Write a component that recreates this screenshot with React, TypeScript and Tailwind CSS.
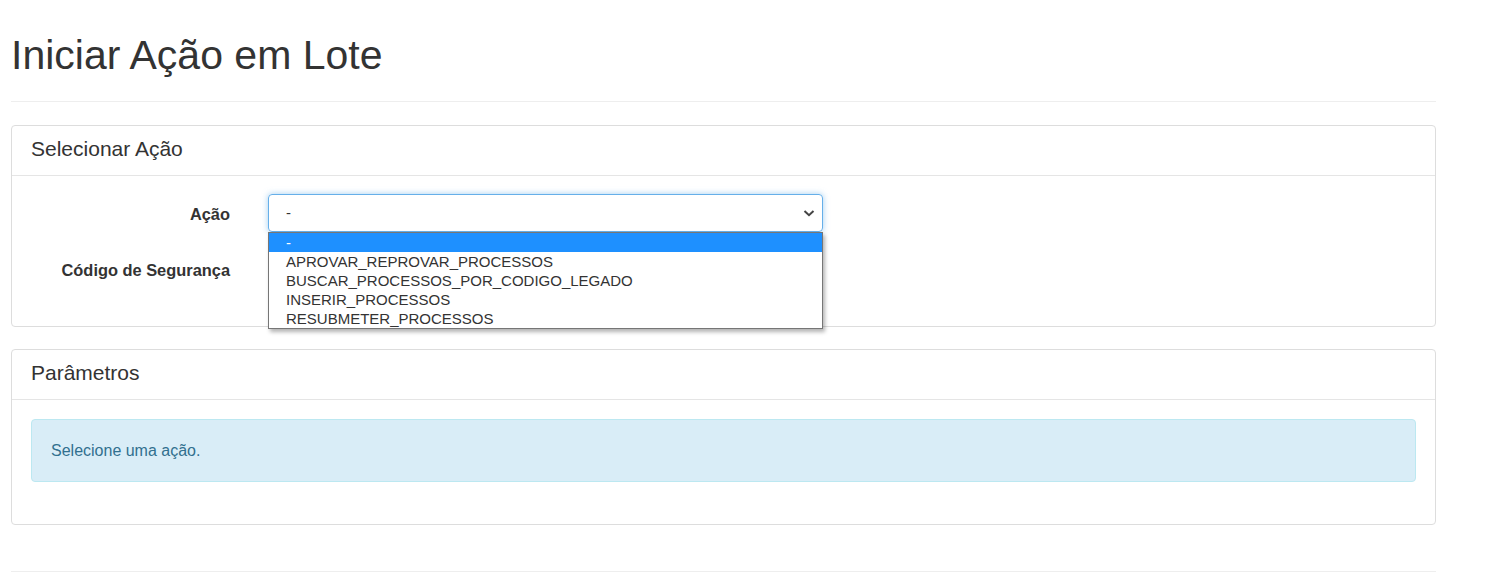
import React from "react"

const acoes = [
  "-",
  "APROVAR_REPROVAR_PROCESSOS",
  "BUSCAR_PROCESSOS_POR_CODIGO_LEGADO",
  "INSERIR_PROCESSOS",
  "RESUBMETER_PROCESSOS",
]

const Panel: React.FC<{ title: string; children: React.ReactNode }> = ({ title, children }) => (
  <div className="rounded-[4px] border border-[#dddddd] bg-white">
    <div className="flex h-[50px] items-center border-b border-[#e5e5e5] px-[19px] pb-[3px] text-[21px] text-[#333333]">
      {title}
    </div>
    {children}
  </div>
)

export default function App() {
  return (
    <div className="min-h-[575px] bg-white font-['Liberation_Sans',Arial,sans-serif] text-[#333333]">
      <div className="ml-[11px] w-[1425px]">
        <h1 className="pt-[35px] text-[41px] leading-[40px]">Iniciar Ação em Lote</h1>
        <hr className="mt-[26px] border-t border-[#eeeeee]" />

        <div className="mt-[23px]">
          <Panel title="Selecionar Ação">
            <div className="flex flex-col gap-[19px] px-[19px] pb-[37px] pt-[18px]">
              <div className="flex items-center">
                <label className="w-[199px] pt-[3px] text-right text-[16.4px] font-bold">Ação</label>
                <div className="relative ml-[38px] w-[555px]">
                  <div className="flex h-[38px] items-center justify-between rounded-[4px] border border-[#66afe9] pl-[17px] pr-[6px] text-[15px] shadow-[0_0_6px_rgba(102,175,233,0.6)]">
                    <span>-</span>
                    <svg width="14" height="10" viewBox="0 0 14 10">
                      <path d="M2.5 3 L7 7.2 L11.5 3" fill="none" stroke="#444" strokeWidth="2" />
                    </svg>
                  </div>
                  <ul className="absolute left-0 top-[38px] z-10 w-[555px] border border-[#767676] bg-white text-[15px] leading-[19px] shadow-[2px_3px_4px_rgba(0,0,0,0.3)]">
                    {acoes.map((a, i) => (
                      <li
                        key={a}
                        className={
                          i === 0
                            ? "bg-[#1e90ff] pl-[17px] text-white"
                            : "pl-[17px] text-[#333333]"
                        }
                      >
                        {a}
                      </li>
                    ))}
                  </ul>
                </div>
              </div>
              <div className="flex items-center">
                <label className="w-[199px] pt-[1px] text-right text-[16.4px] font-bold">Código de Segurança</label>
                <div className="ml-[38px] h-[38px] w-[555px] rounded-[4px] border border-[#cccccc]" />
              </div>
            </div>
          </Panel>
        </div>

        <div className="mt-[22px]">
          <Panel title="Parâmetros">
            <div className="px-[19px] pb-[42px] pt-[19px]">
              <div className="flex h-[63px] items-center rounded-[4px] border border-[#bce8f1] bg-[#d9edf7] px-[19px] text-[16px] text-[#31708f]">
                Selecione uma ação.
              </div>
            </div>
          </Panel>
        </div>

        <hr className="mt-[46px] border-t border-[#eeeeee]" />
      </div>
    </div>
  )
}
